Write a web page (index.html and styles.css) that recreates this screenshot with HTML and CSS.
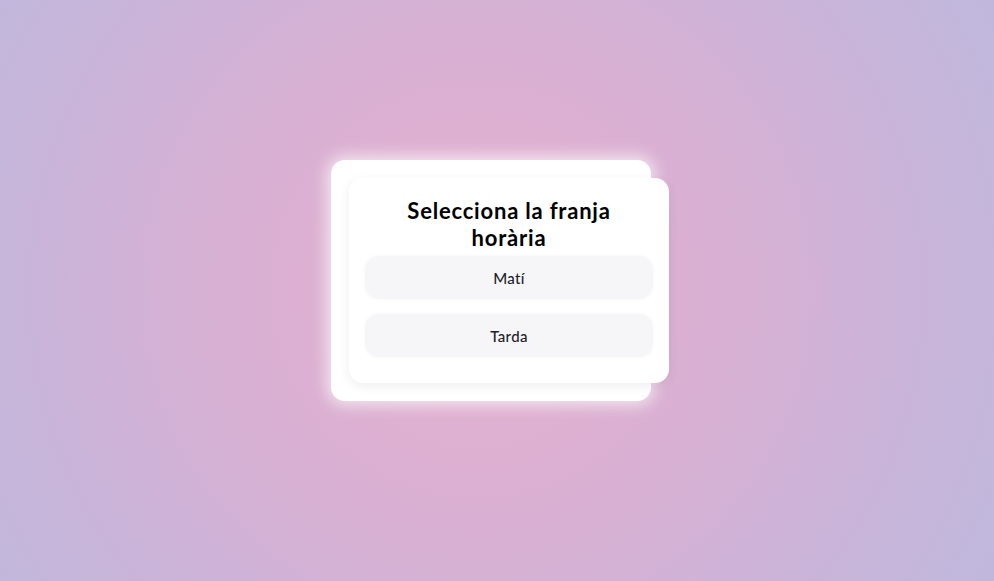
FILE: index.html
```html
<!DOCTYPE html>
<html lang="ca">
<head>
<meta charset="utf-8">
<title>Franja horària</title>
<link rel="stylesheet" href="styles.css">
</head>
<body>
<div class="stack">
  <div class="card">
    <h1 class="title">Selecciona la franja horària</h1>
    <div class="options">
      <button class="option">Matí</button>
      <button class="option">Tarda</button>
    </div>
  </div>
</div>
</body>
</html>
```
FILE: styles.css
```css
html, body {
  margin: 0;
  height: 100%;
}
body {
  font-family: "Lato", "Noto Sans", sans-serif;
  background: radial-gradient(circle farthest-corner at 48% 50%, #e6b0ce 0%, #d9b0d3 40%, #c9b4d9 75%, #bfb8dc 100%);
  overflow: hidden;
}
.stack {
  position: relative;
  width: 320px;
  margin-left: 331px;
  padding-top: 160px;
}
.stack::before {
  content: "";
  position: absolute;
  left: 0;
  top: 160px;
  width: 320px;
  height: 241px;
  background: #fff;
  border-radius: 14px;
  box-shadow: 0 0 16px 4px rgba(255, 255, 255, 0.7);
}
.card {
  position: relative;
  margin-left: 18px;
  margin-top: 18px;
  width: 320px;
  box-sizing: border-box;
  padding: 19px 16px 26px;
  background: #fff;
  border-radius: 14px;
  box-shadow: 0 3px 12px rgba(0, 0, 0, 0.07);
}
.title {
  margin: 0 20px 5px;
  font-size: 22px;
  line-height: 27px;
  font-weight: 700;
  letter-spacing: 0.8px;
  text-align: center;
  color: #000;
}
.options {
  display: flex;
  flex-direction: column;
  gap: 15px;
}
.option {
  height: 43px;
  border: none;
  border-radius: 14px;
  background: #f6f6f8;
  box-shadow: 0 0 4px rgba(0, 0, 0, 0.04);
  font-family: inherit;
  font-size: 15px;
  font-weight: 500;
  letter-spacing: 0.3px;
  color: #1d1d2b;
  cursor: pointer;
}
```
